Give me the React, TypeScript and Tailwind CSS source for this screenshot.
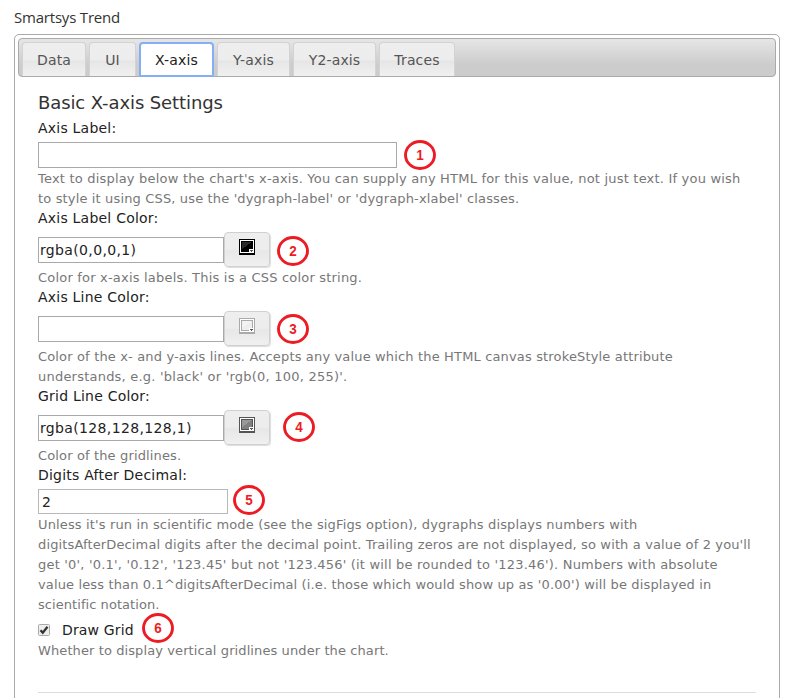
import React from 'react';

const TABS = [
  { label: 'Data', width: 'w-[64px]' },
  { label: 'UI', width: 'w-[47px]' },
  { label: 'X-axis', width: 'w-[75px]' },
  { label: 'Y-axis', width: 'w-[73px]' },
  { label: 'Y2-axis', width: 'w-[83px]' },
  { label: 'Traces', width: 'w-[76px]' },
];

function Marker({ n, place }: { n: number; place: string }) {
  return (
    <svg className={`absolute ${place}`} width="32" height="30" viewBox="0 0 32 30">
      <ellipse cx="16" cy="15" rx="14.5" ry="13.5" fill="white" stroke="#ed1c24" strokeWidth="2.9" />
      <text x="16" y="20" textAnchor="middle" fontFamily="Liberation Sans, sans-serif" fontWeight="bold" fontSize="15" textLength="7.5" lengthAdjust="spacingAndGlyphs" fill="#ed1c24">{n}</text>
    </svg>
  );
}

function Tabs() {
  return (
    <div className="flex h-[39px] items-end gap-[3px] rounded-[4px] border border-[#aaa] bg-linear-to-b from-[#e6e6e6] to-[#ccc] to-70% pl-[3px]">
      {TABS.map((t, i) => (
        <div
          key={t.label}
          className={`${t.width} flex items-center justify-center rounded-t-[4px] text-[14px] tracking-[0.15px] ${
            i === 2
              ? '-mb-px h-[35px] rounded-b-[2px] border-2 border-[#84aef5] bg-white pt-px text-[#212121]'
              : 'h-[34px] border-x border-t border-[#d3d3d3] pt-px bg-[linear-gradient(#eee_0%,#ededed_50%,#e6e6e6_55%,#f0f0f0_100%)] text-[#555]'
          }`}
        >
          {t.label}
        </div>
      ))}
    </div>
  );
}

function Label({ children }: { children: React.ReactNode }) {
  return <div className="h-[19px] text-[14px] leading-[18px] tracking-[0.22px] text-[#222]">{children}</div>;
}

function Help({ children }: { children: React.ReactNode }) {
  return <div className="text-[13px] leading-5 whitespace-nowrap text-[#777]">{children}</div>;
}

function Swatch({ edge, fill, shine }: { edge: string; fill: string; shine: string }) {
  return (
    <svg width="16" height="16" viewBox="0 0 16 16" shapeRendering="crispEdges">
      <rect width="16" height="16" fill={edge} />
      <rect x="1" y="1" width="14" height="13" fill="white" />
      <rect x="2" y="2" width="12" height="11" fill={edge} />
      <rect x="3" y="3" width="10" height="9" fill={fill} />
      <path d="M3 3H13L3 10Z" fill={shine} />
      <rect x="10" y="10" width="5" height="4" fill="white" />
      <path d="M11 11h3v1h-1v1h-1v-1h-1z" fill="#555" />
    </svg>
  );
}

function ColorField({ value, children }: { value: string; children: React.ReactNode }) {
  return (
    <div className="flex h-[40px] items-start">
      <div className="mt-[9px] flex h-[26px] w-[186px] items-center border border-[#a9a9a9] pl-px text-[14px] tracking-[0.35px] text-[#222]">{value}</div>
      <div className="mt-[4px] flex h-[35px] w-[46px] justify-center rounded-[4px] border border-[#d0d0d0] bg-[linear-gradient(#eee_0%,#ededed_49%,#e7e7e7_54%,#f0f0f0_100%)] pt-[6px] shadow-[1px_1px_1px_#ddd]">
        {children}
      </div>
    </div>
  );
}

export default function App() {
  return (
    <div className="relative h-[698px] w-[792px] overflow-hidden bg-white font-['DejaVu_Sans',sans-serif]">
      <div className="h-[34px] pt-[7px] pl-[14px] font-['Open_Sans',sans-serif] text-[15px] leading-[21px] tracking-[-0.2px] text-[#333]">Smartsys Trend</div>
      <div className="ml-[14px] h-[700px] w-[766px] rounded-[5px] border border-[#aaa] p-[3px]">
        <Tabs />
        <div className="pt-[15px] pr-[20px] pl-5">
          <h2 className="h-[27px] text-[18px] leading-[22px] tracking-[-0.1px] text-[#333]">Basic X-axis Settings</h2>
          <Label>Axis Label:</Label>
          <div className="mt-[4px] mb-px h-[26px] w-[359px] border border-[#a9a9a9]" />
          <Help>
            <div className="tracking-[0.2px]">Text to display below the chart's x-axis. You can supply any HTML for this value, not just text. If you wish</div>
            <div className="tracking-[0.149px]">to style it using CSS, use the 'dygraph-label' or 'dygraph-xlabel' classes.</div>
          </Help>
          <Label>Axis Label Color:</Label>
          <ColorField value="rgba(0,0,0,1)"><Swatch edge="#000" fill="#000" shine="#292929" /></ColorField>
          <Help><div className="tracking-[0.2px]">Color for x-axis labels. This is a CSS color string.</div></Help>
          <Label>Axis Line Color:</Label>
          <ColorField value=""><Swatch edge="#aaa" fill="#eee" shine="#f3f3f3" /></ColorField>
          <Help>
            <div className="tracking-[0.155px]">Color of the x- and y-axis lines. Accepts any value which the HTML canvas strokeStyle attribute</div>
            <div className="tracking-[0.22px]">understands, e.g. 'black' or 'rgb(0, 100, 255)'.</div>
          </Help>
          <Label>Grid Line Color:</Label>
          <ColorField value="rgba(128,128,128,1)"><Swatch edge="#555" fill="#808080" shine="#999" /></ColorField>
          <Help><div className="tracking-[0.14px]">Color of the gridlines.</div></Help>
          <Label>Digits After Decimal:</Label>
          <div className="mt-[4px] mb-px flex h-[25px] w-[190px] items-center border border-[#b8b8b8] pt-px pl-[3px] text-[14px] text-[#222]">2</div>
          <Help>
            <div className="tracking-[0.145px]">Unless it's run in scientific mode (see the sigFigs option), dygraphs displays numbers with</div>
            <div className="tracking-[0.135px]">digitsAfterDecimal digits after the decimal point. Trailing zeros are not displayed, so with a value of 2 you'll</div>
            <div className="tracking-[0.2px]">get '0', '0.1', '0.12', '123.45' but not '123.456' (it will be rounded to '123.46'). Numbers with absolute</div>
            <div className="tracking-[0.14px]">value less than 0.1^digitsAfterDecimal (i.e. those which would show up as '0.00') will be displayed in</div>
            <div className="tracking-[0.06px]">scientific notation.</div>
          </Help>
          <div className="flex h-[26px] items-center pt-[4px] text-[14px] tracking-[0.15px] text-[#222]">
            <svg className="mr-3 h-3 w-3" viewBox="0 0 12 12">
              <rect x=".5" y=".5" width="11" height="11" rx="1" fill="#eee" stroke="#aaa" />
              <path d="M2.5 6.2 4.8 8.8 9.5 2.8" fill="none" stroke="#333" strokeWidth="2.3" />
            </svg>
            Draw Grid
          </div>
          <Help><div className="tracking-[0.1px]">Whether to display vertical gridlines under the chart.</div></Help>
          <div className="mt-[31px] h-px bg-[#ddd]" />
        </div>
      </div>
      <Marker n={1} place="left-[404px] top-[140px]" />
      <Marker n={2} place="left-[277px] top-[236px]" />
      <Marker n={3} place="left-[277px] top-[314px]" />
      <Marker n={4} place="left-[283px] top-[412px]" />
      <Marker n={5} place="left-[233px] top-[485px]" />
      <Marker n={6} place="left-[142px] top-[613px]" />
    </div>
  );
}
